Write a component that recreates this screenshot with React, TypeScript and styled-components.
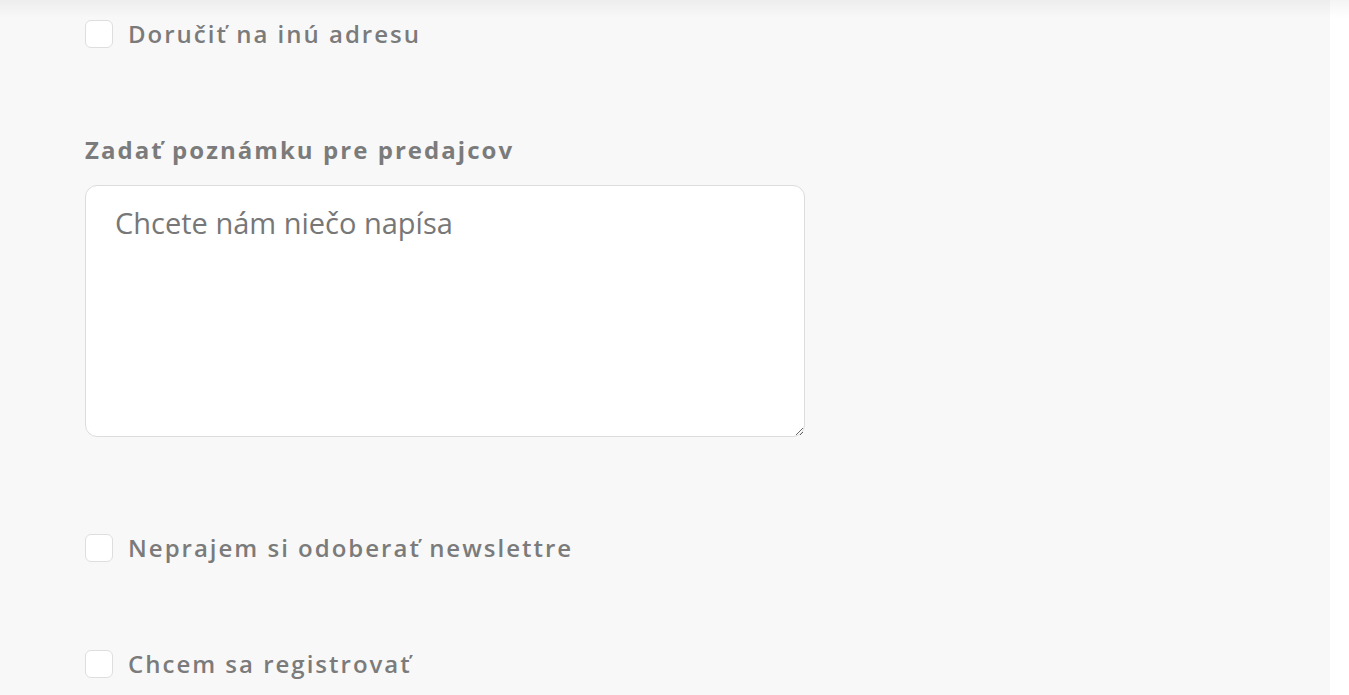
import React from "react";
import styled, { createGlobalStyle } from "styled-components";

const Global = createGlobalStyle`
  html, body { margin: 0; padding: 0; background: #ffffff; }
  body { font-family: "Open Sans", "Noto Sans", sans-serif; }
  * { box-sizing: border-box; }
`;

const Page = styled.div`
  position: relative;
  display: flex;
  width: 100%;
  height: 695px;
  overflow: hidden;
  background: #ffffff;
  &::before {
    content: "";
    position: absolute;
    left: 0;
    right: 0;
    top: 0;
    height: 18px;
    background: linear-gradient(to bottom, rgba(0,0,0,0.045), rgba(0,0,0,0));
    pointer-events: none;
  }
`;

const Panel = styled.main`
  width: 1330px;
  flex: none;
  background: #f8f8f8;
  padding: 18px 0 0 85px;
  display: flex;
  flex-direction: column;
`;

const CheckRow = styled.label<{ $gap: number }>`
  display: flex;
  align-items: center;
  gap: 15px;
  margin-top: ${(p) => p.$gap}px;
  cursor: pointer;
`;

const Box = styled.span`
  width: 28px;
  height: 28px;
  flex: none;
  background: #ffffff;
  border: 1px solid #dedede;
  border-radius: 6px;
`;

const LabelText = styled.span`
  font-family: "Open Sans", sans-serif;
  font-weight: 600;
  font-size: 24px;
  letter-spacing: 2px;
  color: #7b7b7b;
  line-height: 32px;
`;

const Heading = styled.h3`
  margin: 84px 0 0;
  font-family: "Open Sans", sans-serif;
  font-weight: 700;
  font-size: 24px;
  letter-spacing: 2.05px;
  color: #7b7b7b;
  line-height: 32px;
`;

const Note = styled.textarea`
  margin-top: 19px;
  width: 720px;
  height: 252px;
  background: #ffffff;
  border: 1px solid #dcdcdc;
  border-radius: 12px;
  padding: 17px 29px;
  font-family: "Open Sans", sans-serif;
  font-size: 29px;
  line-height: 40px;
  color: #777;
  resize: vertical;
  outline: none;
  &::placeholder {
    color: #777777;
    opacity: 1;
  }
`;

const Side = styled.aside`
  flex: 1;
  background: #ffffff;
`;

export default function App() {
  return (
    <>
      <Global />
      <Page>
        <Panel>
          <CheckRow $gap={0}>
            <Box />
            <LabelText>Doručiť na inú adresu</LabelText>
          </CheckRow>
          <Heading>Zadať poznámku pre predajcov</Heading>
          <Note placeholder="Chcete nám niečo napísa" />
          <CheckRow $gap={95}>
            <Box />
            <LabelText>Neprajem si odoberať newslettre</LabelText>
          </CheckRow>
          <CheckRow $gap={84}>
            <Box />
            <LabelText>Chcem sa registrovať</LabelText>
          </CheckRow>
        </Panel>
        <Side />
      </Page>
    </>
  );
}
